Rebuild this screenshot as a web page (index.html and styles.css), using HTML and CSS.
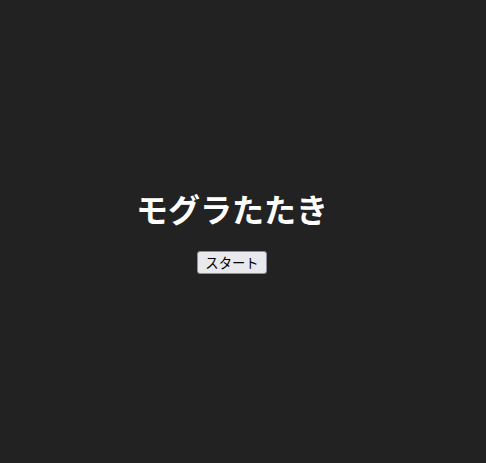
FILE: index.html
```html
<!DOCTYPE html>
<html lang="ja">
<head>
<meta charset="utf-8">
<title>モグラたたき</title>
<link rel="stylesheet" href="styles.css">
</head>
<body>
<main class="game">
  <h1 class="title">モグラたたき</h1>
  <button class="start" type="button">スタート</button>
</main>
</body>
</html>
```
FILE: styles.css
```css
html, body {
  margin: 0;
  height: 100%;
  background: #222222;
}
body {
  font-family: "Noto Sans CJK JP", "Noto Sans", sans-serif;
  color: #ffffff;
}
.game {
  height: 100%;
  box-sizing: border-box;
  padding-right: 22px;
  display: flex;
  flex-direction: column;
  align-items: center;
  justify-content: center;
}
.title {
  margin: 0 0 24px;
  font-size: 32px;
  font-weight: 700;
  line-height: 1.2;
}
.start {
  font-family: "Noto Sans CJK JP", sans-serif;
  font-size: 13.33px;
  line-height: 17px;
  padding: 2px 7px;
  color: #000;
  background: #e9e9ed;
  border: 1px solid #8f8f9d;
  border-radius: 3px;
}
```
